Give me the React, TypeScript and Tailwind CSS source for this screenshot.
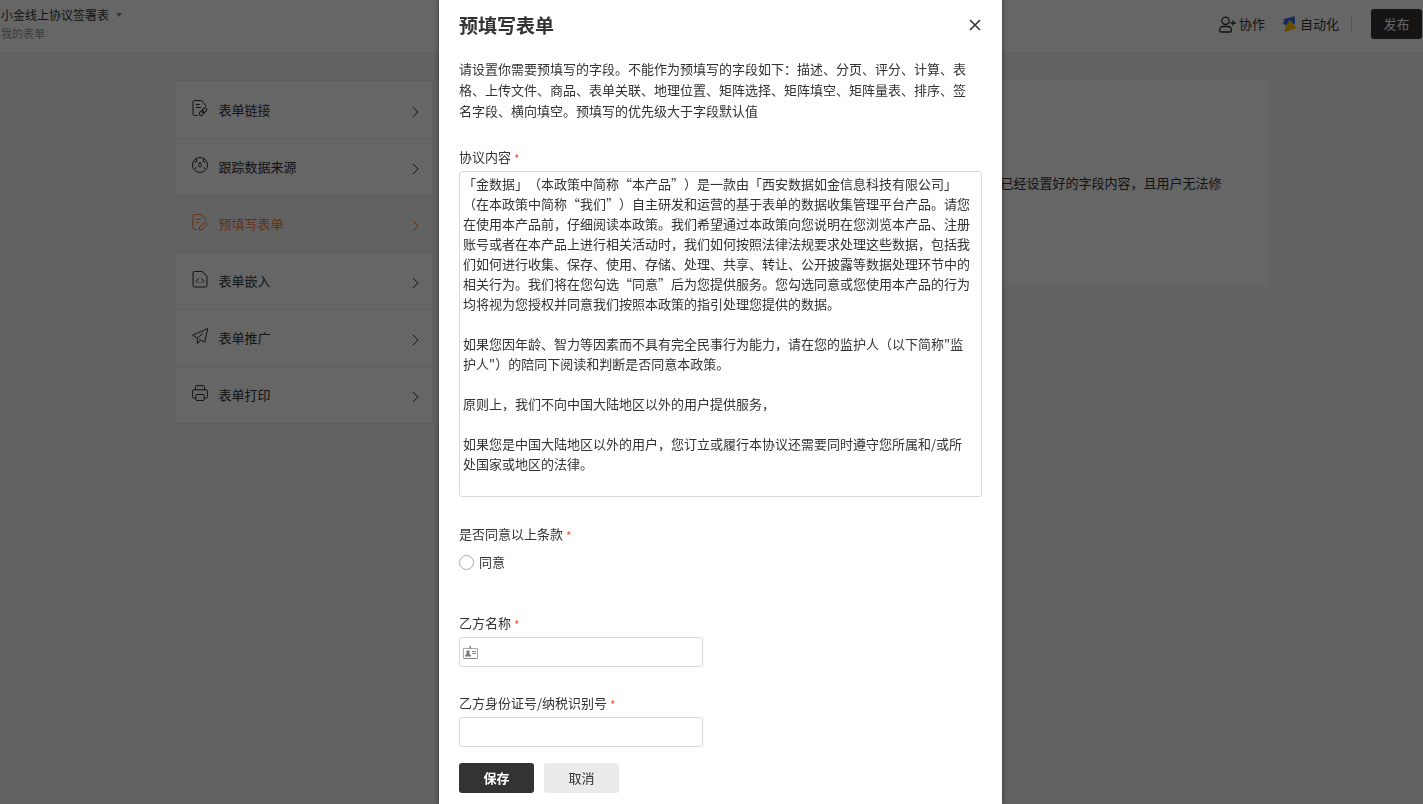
import { useState } from 'react'
import type { ReactNode } from 'react'

const menu = [
  { key: 'link', label: '表单链接' },
  { key: 'track', label: '跟踪数据来源' },
  { key: 'prefill', label: '预填写表单' },
  { key: 'embed', label: '表单嵌入' },
  { key: 'promote', label: '表单推广' },
  { key: 'print', label: '表单打印' },
]

const icons: Record<string, ReactNode> = {
  link: (
    <>
      <path d="M5.500 15.500H2.600A1.600 1.600 0 0 1 1 13.900V2.100A1.600 1.600 0 0 1 2.600.5H9.500l4 4.500v1.500M4 4.500h3.500M4 7.500h5" />
      <rect x="10.600" y="7.600" width="3.400" height="5.400" rx="1.700" transform="rotate(42 12.300 10.300)" />
      <rect x="7.800" y="10.400" width="3.400" height="5.400" rx="1.700" transform="rotate(42 9.500 13.100)" />
    </>
  ),
  track: (
    <>
      <circle cx="8" cy="8" r="7.500" />
      <path d="M8 5.200 6.700 7.700a1.500 1.500 0 1 0 2.600 0zM2.500 5.500 4.800 4.500 4.500 2M13.500 5.500l-2.300-1 .3-2.500M2.800 11.500l1.700-.8M13.200 11.500l-1.700-.8" />
    </>
  ),
  prefill: (
    <>
      <path d="M5 15.500H2.600A1.600 1.600 0 0 1 1 13.900V2.100A1.600 1.600 0 0 1 2.600.5H9.500l4 4.500v1.500M4 5.500h4.500M4 8.500h3" />
      <path d="m7.500 13.200 4.700-4.400a1.200 1.200 0 0 1 1.700 0l.7.8a1.200 1.200 0 0 1 0 1.600L10 15.700H7.500z" />
    </>
  ),
  embed: (
    <>
      <path d="M2.600.5H10l5 4.600v9.300a1.600 1.600 0 0 1-1.600 1.600H2.600A1.600 1.600 0 0 1 1 14.400V2.100A1.600 1.600 0 0 1 2.600.5z" />
      <path d="M6.500 7.500 4.300 9.700l2.200 2.200M9.500 7.500l2.200 2.200-2.200 2.200" />
    </>
  ),
  promote: <path d="M15.800.6.6 7.200l4.600 2.900.3 5.400 3-3.200 4.200 1.800zM5.200 10.100l6.200-5M8.500 12.300 7 10.800" />,
  print: (
    <>
      <path d="M3.500 4.800V1.700A1.200 1.200 0 0 1 4.700.5h6.600a1.200 1.200 0 0 1 1.200 1.200v3.100M3.800 13H1.900A1.400 1.400 0 0 1 .5 11.600V6.200A1.400 1.400 0 0 1 1.900 4.800h12.200a1.400 1.400 0 0 1 1.400 1.400v5.400a1.400 1.400 0 0 1-1.400 1.400h-1.900" />
      <path d="M5 9.500h6a1.200 1.200 0 0 1 1.200 1.200v3.600a1.200 1.200 0 0 1-1.200 1.200H5a1.200 1.200 0 0 1-1.200-1.200v-3.600A1.200 1.200 0 0 1 5 9.500z" />
    </>
  ),
}

const agreement = `「金数据」（本政策中简称“本产品”）是一款由「西安数据如金信息科技有限公司」（在本政策中简称“我们”）自主研发和运营的基于表单的数据收集管理平台产品。请您在使用本产品前，仔细阅读本政策。我们希望通过本政策向您说明在您浏览本产品、注册账号或者在本产品上进行相关活动时，我们如何按照法律法规要求处理这些数据，包括我们如何进行收集、保存、使用、存储、处理、共享、转让、公开披露等数据处理环节中的相关行为。我们将在您勾选“同意”后为您提供服务。您勾选同意或您使用本产品的行为均将视为您授权并同意我们按照本政策的指引处理您提供的数据。

如果您因年龄、智力等因素而不具有完全民事行为能力，请在您的监护人（以下简称"监护人"）的陪同下阅读和判断是否同意本政策。

原则上，我们不向中国大陆地区以外的用户提供服务，

如果您是中国大陆地区以外的用户，您订立或履行本协议还需要同时遵守您所属和/或所处国家或地区的法律。`

function Required() {
  return <span className="ml-[3px] align-[-2px] text-[12px] leading-none text-[#f5573e]">*</span>
}

function Header() {
  return (
    <header className="flex h-[54px] items-start justify-between border-b border-[#e8e8e8] bg-white pr-px">
      <div className="pt-1.5 pl-px">
        <button type="button" className="flex items-center gap-[7px] text-[12px] leading-[18px] text-[#333]">
          小金线上协议签署表
          <svg className="h-1 w-1.5 fill-[#888]" viewBox="0 0 6 4">
            <path d="M0 0h6L3 4z" />
          </svg>
        </button>
        <a href="#forms" className="block text-[11px] leading-[18px] text-[#999]">我的表单</a>
      </div>
      <div className="flex items-center pt-[9px] text-[13px] text-[#333]">
        <button type="button" className="flex items-center gap-[3px]">
          <svg className="h-[17px] w-[17px] fill-none stroke-current" strokeWidth="1.3" viewBox="0 0 17 17">
            <circle cx="6.500" cy="4.800" r="3.700" />
            <path d="M3.800 10.500h5.400a3.200 3.200 0 0 1 3.200 3.200v1a1.300 1.300 0 0 1-1.300 1.300H1.900a1.300 1.300 0 0 1-1.300-1.300v-1a3.200 3.200 0 0 1 3.200-3.200zM14 4.500v5M11.500 7H17" />
          </svg>
          协作
        </button>
        <button type="button" className="ml-[18px] flex items-center gap-1">
          <svg className="h-4 w-[13px]" viewBox="0 0 13 16">
            <path d="M10.800.4c.6-.2 1 .1 1 .7l.3 6.500L4.500 9.500 1 8.300C-.2 7.500 0 6.800.6 6.100L1.800 4.600.4 4.300C-.1 4 0 3.500.5 3.300z" fill="#2b6de8" />
            <path d="M6.300 4.600c.6-.4 1-.4 1.500.2l5 6.500c.3.500.1 1-.4 1.200L3 15.700c-1.100.3-1.800-.3-1.500-1.300L3.200 9.500z" fill="#ffc800" />
          </svg>
          自动化
        </button>
        <span className="ml-3 h-5 w-px bg-[#dcdcdc]" />
        <button type="button" className="ml-[19px] h-[30px] w-[51px] rounded-[3px] bg-[#333] text-white">发布</button>
      </div>
    </header>
  )
}

function SideMenu() {
  return (
    <nav className="w-[259px] shrink-0 border-x border-t border-[#ededed] bg-white pt-px">
      {menu.map((item) => (
        <a
          key={item.key}
          href={`#${item.key}`}
          className={`flex h-[57px] items-center border-b border-[#ebebeb] pr-2 pl-[17px] text-[13px] ${
            item.key === 'prefill' ? 'bg-[#f5f5f5] text-[#ff7930]' : 'text-[#333]'
          }`}
        >
          <svg className="mb-1 h-[17px] w-4 fill-none stroke-current" viewBox="0 0 16 17">
            {icons[item.key]}
          </svg>
          <span className="ml-[11px] flex-1">{item.label}</span>
          <svg className="mt-1 h-3 w-3 fill-none stroke-current" viewBox="0 0 12 12">
            <path d="m1 1 5 5-5 5" />
          </svg>
        </a>
      ))}
    </nav>
  )
}

function PrefillDialog() {
  const [content, setContent] = useState(agreement)

  return (
    <div className="fixed inset-0 flex justify-center overflow-hidden bg-black/60 pl-[18px]">
      <form
        role="dialog"
        aria-labelledby="dialog-title"
        className="min-h-full w-full max-w-[563px] bg-white px-5 shadow-[0_0_5px_rgba(0,0,0,0.5)]"
        onSubmit={(e) => e.preventDefault()}
      >
        <div className="flex h-[50px] items-center justify-between">
          <h2 id="dialog-title" className="text-[19px] font-bold">预填写表单</h2>
          <button type="button" aria-label="关闭" className="py-0.5 pr-px">
            <svg className="h-3 w-3 stroke-[#333]" strokeWidth="1.6" viewBox="0 0 12 12">
              <path d="m1 1 10 10M11 1 1 11" />
            </svg>
          </button>
        </div>

        <p className="mt-2 pr-2 leading-[21px]">
          请设置你需要预填写的字段。不能作为预填写的字段如下：描述、分页、评分、计算、表格、上传文件、商品、表单关联、地理位置、矩阵选择、矩阵填空、矩阵量表、排序、签名字段、横向填空。预填写的优先级大于字段默认值
        </p>

        <label htmlFor="content" className="mt-[26px] mb-1 block leading-5">
          协议内容
          <Required />
        </label>
        <textarea
          id="content"
          value={content}
          onChange={(e) => setContent(e.target.value)}
          className="block h-[326px] w-full resize-none overflow-hidden rounded-[3px] border border-[#d9d9d9] py-0.5 pr-2 pl-[3px] leading-5"
        />

        <fieldset className="mt-[27px]">
          <legend className="leading-5">
            是否同意以上条款
            <Required />
          </legend>
          <label className="mt-2 flex h-5 items-center gap-[5px]">
            <input type="radio" name="agree" className="h-[15px] w-[15px] appearance-none rounded-full border border-[#aaa] checked:border-4 checked:border-[#333]" />
            同意
          </label>
        </fieldset>

        <label htmlFor="party" className="mt-[41px] mb-1 block leading-5">
          乙方名称
          <Required />
        </label>
        <div className="relative w-[244px]">
          <input id="party" type="text" className="block h-[30px] w-full rounded-[3px] border border-[#d9d9d9] pr-2 pl-6" />
          <svg className="pointer-events-none absolute top-[9px] left-1 h-[14px] w-[15px]" viewBox="0 0 15 14">
            <path d="M.5 2.500h14v10H.5z" fill="none" stroke="#aaa" />
            <path d="M6.500 0H8v3H6.500z" fill="#888" />
            <path d="M3.500 4.500h3v3.500l1.500 1.500v1H2v-1L3.500 8z" fill="#777" />
            <path d="M9 5.500h4M9 7.500h4M1 12.500h13" stroke="#888" />
          </svg>
        </div>

        <label htmlFor="tax-id" className="mt-[26px] mb-1 block leading-5">
          乙方身份证号/纳税识别号
          <Required />
        </label>
        <input id="tax-id" type="text" className="block h-[30px] w-[244px] rounded-[3px] border border-[#d9d9d9] px-2" />

        <div className="mt-4 flex gap-2.5">
          <button type="submit" className="h-[30px] w-[75px] rounded-[3px] bg-[#333] font-bold text-white">保存</button>
          <button type="button" className="h-[30px] w-[75px] rounded-[3px] bg-[#ebebeb]">取消</button>
        </div>
      </form>
    </div>
  )
}

export default function App() {
  return (
    <div className="min-h-screen bg-[#f5f5f5] font-['Noto_Sans_CJK_SC',sans-serif] text-[13px] text-[#333] [text-spacing-trim:space-all]">
      <Header />
      <div className="pl-[18px]">
        <main className="mx-auto flex max-w-[1094px] items-start gap-5 pt-[26px]">
          <SideMenu />
          <section className="flex h-[206px] flex-1 items-center justify-end bg-white pr-[46px]">
            <p>已经设置好的字段内容，且用户无法修</p>
          </section>
        </main>
      </div>
      <PrefillDialog />
    </div>
  )
}
